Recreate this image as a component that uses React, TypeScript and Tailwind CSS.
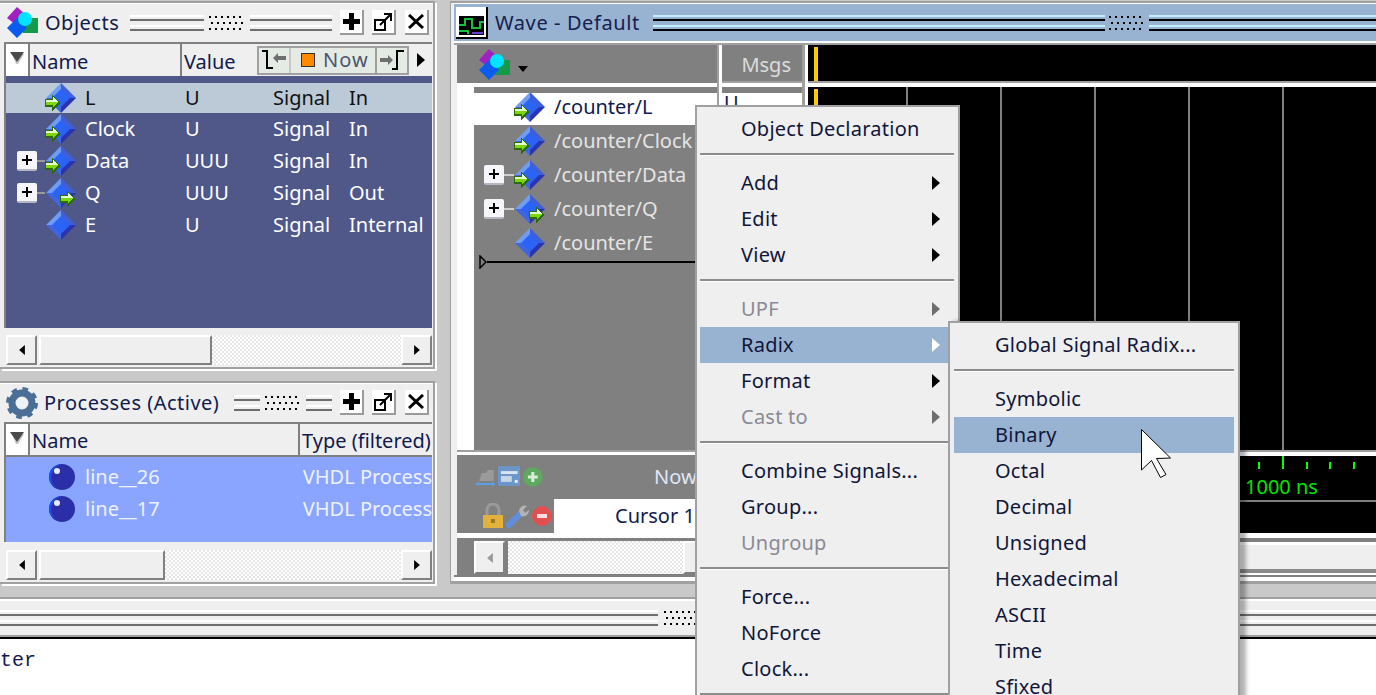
import clsx from "clsx";

type MenuEntry =
  | { kind: "sep" }
  | { kind: "item"; label: string; arrow?: boolean; disabled?: boolean; active?: boolean };

const item = (label: string, opts: Partial<Extract<MenuEntry, { kind: "item" }>> = {}): MenuEntry => ({
  kind: "item",
  label,
  ...opts,
});
const sep: MenuEntry = { kind: "sep" };

const mainMenu: MenuEntry[] = [
  item("Object Declaration"),
  sep,
  item("Add", { arrow: true }),
  item("Edit", { arrow: true }),
  item("View", { arrow: true }),
  sep,
  item("UPF", { arrow: true, disabled: true }),
  item("Radix", { arrow: true, active: true }),
  item("Format", { arrow: true }),
  item("Cast to", { arrow: true, disabled: true }),
  sep,
  item("Combine Signals..."),
  item("Group..."),
  item("Ungroup", { disabled: true }),
  sep,
  item("Force..."),
  item("NoForce"),
  item("Clock..."),
  sep,
];

const radixMenu: MenuEntry[] = [
  item("Global Signal Radix..."),
  sep,
  item("Symbolic"),
  item("Binary", { active: true }),
  item("Octal"),
  item("Decimal"),
  item("Unsigned"),
  item("Hexadecimal"),
  item("ASCII"),
  item("Time"),
  item("Sfixed"),
];

const objectRows = [
  { name: "L", value: "U", mode: "In", arrow: "in", selected: true },
  { name: "Clock", value: "U", mode: "In", arrow: "in" },
  { name: "Data", value: "UUU", mode: "In", arrow: "in", plus: true },
  { name: "Q", value: "UUU", mode: "Out", arrow: "out", plus: true },
  { name: "E", value: "U", mode: "Internal", arrow: "none" },
];

const waveRows = [
  { name: "/counter/L", arrow: "in", selected: true },
  { name: "/counter/Clock", arrow: "in" },
  { name: "/counter/Data", arrow: "in", plus: true },
  { name: "/counter/Q", arrow: "out", plus: true },
  { name: "/counter/E", arrow: "none" },
];

function SignalIcon({ arrow }: { arrow: string }) {
  return (
    <svg width="32" height="32" viewBox="0 0 32 32" className="shrink-0">
      <path d="M16 1 L31 16 L16 16 Z" fill="#3d5fd8" />
      <path d="M16 1 L1 16 L16 16 Z" fill="#6f9df2" />
      <path d="M1 16 L16 31 L16 16 Z" fill="#3f66dc" />
      <path d="M31 16 L16 31 L16 16 Z" fill="#2a35ad" />
      <path d="M16 7 L25 16 L16 25 L7 16 Z" fill="#2a63f5" />
      {arrow === "in" && (
        <g shapeRendering="crispEdges">
          <path d="M0 17 H7 V13 L15 21 L7 29 V25 H0 Z" fill="#2d6a08" />
          <path d="M1 18 H8 V15 L13 20 H1 Z" fill="#e4ffd0" />
          <path d="M1 20 H13 L8 25 V23 H1 Z" fill="#7cd80a" />
        </g>
      )}
      {arrow === "out" && (
        <g shapeRendering="crispEdges">
          <path d="M15 18 H22 V14 L30 22 L22 30 V26 H15 Z" fill="#2d6a08" />
          <path d="M16 19 H23 V16 L28 21 H16 Z" fill="#e4ffd0" />
          <path d="M16 21 H28 L23 26 V24 H16 Z" fill="#7cd80a" />
        </g>
      )}
    </svg>
  );
}

function ObjectsIcon() {
  return (
    <svg width="33" height="33" viewBox="0 0 33 33" className="shrink-0">
      <path d="M1 12 L11 1 L19 8 L9 18 Z" fill="#a020c0" />
      <rect x="17" y="12" width="15" height="15" fill="#149a48" />
      <path d="M11 12 L21 22 L11 32 L1 22 Z" fill="#0a5cf0" />
      <circle cx="19" cy="13" r="7" fill="#00e4ff" />
    </svg>
  );
}

function PlusBox() {
  return (
    <span className="flex h-[20px] w-[20px] shrink-0 items-center justify-center rounded-[2px] border-b-2 border-[#b6b6c4] bg-[#f6f6fa] text-black">
      <svg width="12" height="12" viewBox="0 0 12 12" shapeRendering="crispEdges">
        <path d="M5 1 H7 V5 H11 V7 H7 V11 H5 V7 H1 V5 H5 Z" fill="#000" />
      </svg>
    </span>
  );
}

function Triangle({ color, className }: { color: string; className?: string }) {
  return (
    <svg width="8" height="14" viewBox="0 0 8 14" className={className}>
      <path d="M0 0 L8 7 L0 14 Z" fill={color} />
    </svg>
  );
}

function Dots({ dot, className }: { dot: string; className?: string }) {
  const cells: { x: number; y: number }[] = [];
  for (let row = 0; row < 3; row++) {
    for (let col = 0; col < 6; col++) {
      cells.push({ x: 1 + col * 6 + (row === 1 ? 2 : 0), y: 1 + row * 6 });
    }
  }
  return (
    <svg width="38" height="16" viewBox="0 0 38 16" shapeRendering="crispEdges" className={className}>
      {cells.map((c) => (
        <rect key={`${c.x}-${c.y}`} x={c.x} y={c.y} width="2" height="2" fill={dot} />
      ))}
    </svg>
  );
}

function GripLines({ className, tone }: { className?: string; tone: "gray" | "blue" }) {
  const light = tone === "gray" ? "bg-white" : "bg-[#c4eefc]";
  const dark = tone === "gray" ? "bg-[#6e6e6e]" : "bg-black";
  return (
    <div className={clsx("flex flex-col", className)}>
      <div className={clsx("h-[2px]", light)} />
      <div className="h-[2px]" />
      <div className={clsx("h-[2px]", dark)} />
      <div className="h-[4px]" />
      <div className={clsx("h-[2px]", light)} />
      <div className="h-[2px]" />
      <div className={clsx("h-[2px]", dark)} />
    </div>
  );
}

function TitleButton({ children }: { children: React.ReactNode }) {
  return (
    <span className="flex h-[25px] w-[24px] items-center justify-center border-r-2 border-b-2 border-[#9a9a9a] bg-white">
      {children}
    </span>
  );
}

function PanelButtons() {
  return (
    <div className="ml-[8px] flex gap-[8px]">
      <TitleButton>
        <svg width="17" height="17" viewBox="0 0 17 17" shapeRendering="crispEdges">
          <path d="M6 0 H11 V6 H17 V11 H11 V17 H6 V11 H0 V6 H6 Z" fill="#000" />
        </svg>
      </TitleButton>
      <TitleButton>
        <svg width="18" height="18" viewBox="0 0 18 18" fill="none" stroke="#000" strokeWidth="2">
          <rect x="1" y="7" width="10" height="10" />
          <path d="M6 12 L16 2 M10 1 H17 V8" />
        </svg>
      </TitleButton>
      <span className="ml-[1px]">
        <TitleButton>
          <svg width="16" height="15" viewBox="0 0 16 15" fill="none" stroke="#000" strokeWidth="3">
            <path d="M1 1 L15 14 M15 1 L1 14" />
          </svg>
        </TitleButton>
      </span>
    </div>
  );
}

function ScrollButton({ dir, muted }: { dir: "left" | "right"; muted?: boolean }) {
  return (
    <span className="flex h-full w-[31px] shrink-0 items-center justify-center border-t-2 border-l-2 border-r-2 border-b-2 border-t-white border-l-white border-r-[#808080] border-b-[#808080] bg-[#efefef]">
      <Triangle
        color={muted ? "#9a9a9a" : "#000"}
        className={clsx("h-[10px] w-[6px]", dir === "left" && "rotate-180")}
      />
    </span>
  );
}

function Scrollbar({ thumb }: { thumb: string }) {
  return (
    <div className="flex h-[30px] items-stretch">
      <ScrollButton dir="left" />
      <span
        className={clsx(
          "ml-[2px] border-t-2 border-l-2 border-r-2 border-b-2 border-t-white border-l-white border-r-[#808080] border-b-[#808080] bg-[#efefef]",
          thumb,
        )}
      />
      <span className="flex-1 bg-[repeating-conic-gradient(#e6e6e6_0_25%,#ffffff_0_50%)] bg-[length:4px_4px]" />
      <ScrollButton dir="right" />
    </div>
  );
}

function FilterCell() {
  return (
    <div className="flex h-full w-[24px] shrink-0 items-center justify-center border-r-2 border-[#808080] bg-white">
      <svg width="16" height="14" viewBox="0 0 16 14" className="mb-[4px]">
        <path d="M3 3 H15 L9 13 H7 Z" fill="#c4c4c4" />
        <path d="M1 1 H15 L8 11 Z" fill="#4a4a4a" />
      </svg>
    </div>
  );
}

function SidePanel({
  title,
  icon,
  gripLeft,
  height,
  children,
}: {
  title: string;
  icon: React.ReactNode;
  gripLeft: string;
  height: string;
  children: React.ReactNode;
}) {
  return (
    <section
      className={clsx(
        "flex w-[435px] flex-col border-t-2 border-r-2 border-b-2 border-[#a0a0a0] bg-[#efefef] shadow-[2px_2px_0_#fff]",
        height,
      )}
    >
      <div className="flex h-[39px] shrink-0 items-center border-t border-white pr-[4px] pb-px pl-[6px]">
        {icon}
        <span className="ml-[6px] whitespace-nowrap tracking-[0.5px] text-[#111a4e]">{title}</span>
        <GripLines tone="gray" className={gripLeft} />
        <Dots dot="#000" className="mx-[4px] shrink-0" />
        <GripLines tone="gray" className="flex-1" />
        <PanelButtons />
      </div>
      {children}
    </section>
  );
}

function ObjectsPanel() {
  return (
    <SidePanel title="Objects" height="h-[368px]" gripLeft="ml-[11px] w-[74px]" icon={<ObjectsIcon />}>
      <div className="mr-px ml-[4px] flex h-[34px] shrink-0 items-center border-t-2 border-l-2 border-[#808080] bg-[#efefef] text-[#111a4e]">
        <FilterCell />
        <div className="flex h-full w-[152px] items-center border-r-2 border-[#808080] pt-[3px] pl-[2px]">Name</div>
        <div className="flex h-full w-[75px] items-center pt-[3px] pl-[2px]">Value</div>
        <div className="flex h-[29px] w-[152px] items-center border-2 border-[#a0a0a0] bg-[#e4ebe4]">
          <div className="flex h-full w-[32px] items-center justify-center border-r-2 border-[#c8c8c8]">
            <svg width="26" height="22" viewBox="0 0 26 22" fill="none">
              <path d="M1 2 H6 V19 H12" stroke="#000" strokeWidth="2" />
              <path d="M12 9 L17 4 V7 H25 V11 H17 V14 Z" fill="#6e6e6e" />
            </svg>
          </div>
          <div className="flex h-full flex-1 items-center pl-[10px] text-[#4d5570]">
            <span className="h-[14px] w-[14px] border border-[#333] bg-[#ff8a00]" />
            <span className="ml-[8px] tracking-[1px]">Now</span>
          </div>
          <div className="flex h-full w-[32px] items-center justify-center border-l-2 border-[#a0a0a0]">
            <svg width="26" height="22" viewBox="0 0 26 22" fill="none">
              <path d="M1 9 H9 V6 L14 11 L9 16 V13 H1 Z" fill="#6e6e6e" />
              <path d="M13 20 H18 V2 H25" stroke="#000" strokeWidth="2" />
            </svg>
          </div>
        </div>
        <Triangle color="#000" className="ml-[8px]" />
      </div>
      <div className="mr-px ml-[4px] h-[252px] shrink-0 border-l-2 border-[#808080] bg-[#50588a] pt-[7px] text-white">
        {objectRows.map((row) => (
          <div
            key={row.name}
            className={clsx(
              "flex items-center",
              row.selected ? "h-[30px] bg-[#bccad8] pb-px text-[#111]" : "h-[32px]",
            )}
          >
            <span className="flex w-[31px] justify-end">{row.plus ? <PlusBox /> : null}</span>
            {row.plus ? <span className="h-[2px] w-[8px] bg-[#9a9a9a]" /> : <span className="w-[8px]" />}
            <SignalIcon arrow={row.arrow} />
            <span className="ml-[8px] w-[100px]">{row.name}</span>
            <span className="w-[88px]">{row.value}</span>
            <span className="w-[76px]">Signal</span>
            <span className="whitespace-nowrap">{row.mode}</span>
          </div>
        ))}
      </div>
      <div className="mt-[7px] mr-px ml-[6px]">
        <Scrollbar thumb="w-[173px]" />
      </div>
    </SidePanel>
  );
}

function ProcessBall() {
  return (
    <svg width="28" height="28" viewBox="0 0 28 28" className="shrink-0">
      <circle cx="14" cy="14" r="13" fill="#2a2fa8" />
      <path d="M14 1 A13 13 0 0 0 1 14 A13 13 0 0 0 8 25 A14 14 0 0 1 14 1 Z" fill="#1a50e8" />
      <circle cx="9" cy="8" r="3" fill="#e6ecff" />
    </svg>
  );
}

function GearIcon() {
  return (
    <svg width="32" height="32" viewBox="0 0 32 32" className="shrink-0">
      <circle cx="16" cy="16" r="10" fill="none" stroke="#4a6f96" strokeWidth="7" />
      <circle cx="16" cy="16" r="14" fill="none" stroke="#4a6f96" strokeWidth="4" strokeDasharray="5.5 5.5" />
      <circle cx="16" cy="16" r="5" fill="#eef3f8" />
    </svg>
  );
}

function ProcessesPanel() {
  return (
    <SidePanel title="Processes (Active)" height="h-[203px]" gripLeft="ml-[15px] w-[26px]" icon={<GearIcon />}>
      <div className="mr-px ml-[4px] flex h-[35px] shrink-0 items-center border-t-2 border-b-2 border-l-2 border-[#808080] text-[#111a4e]">
        <FilterCell />
        <div className="flex h-full w-[270px] items-center border-r-2 border-[#808080] pt-[3px] pl-[2px]">Name</div>
        <div className="flex h-full flex-1 items-center overflow-hidden pt-[3px] pl-[2px] whitespace-nowrap">Type (filtered)</div>
      </div>
      <div className="mr-px ml-[4px] h-[85px] shrink-0 overflow-hidden border-l-2 border-[#808080] bg-[#8aa5ff] pt-[4px] text-[#eef2ff]">
        {["line__26", "line__17"].map((name) => (
          <div key={name} className="flex h-[32px] items-center">
            <span className="ml-[42px]">
              <ProcessBall />
            </span>
            <span className="ml-[9px] w-[218px]">{name}</span>
            <span className="whitespace-nowrap">VHDL Process</span>
          </div>
        ))}
      </div>
      <div className="mt-[8px] mr-px ml-[6px]">
        <Scrollbar thumb="w-[126px]" />
      </div>
    </SidePanel>
  );
}

function WaveIcon() {
  return (
    <svg width="32" height="32" viewBox="0 0 32 32" shapeRendering="crispEdges" className="shrink-0">
      <rect width="32" height="32" fill="#fff" />
      <rect x="30" width="2" height="32" fill="#000" />
      <rect y="30" width="32" height="2" fill="#000" />
      <rect x="3" y="3" width="25" height="4" fill="#fff" />
      <rect x="3" y="9" width="25" height="19" fill="#000" />
      <path d="M3 18 H9 V12 H16 V21 H24 V15 H28" fill="none" stroke="#12c040" strokeWidth="2" />
      <path d="M3 24 H12 V27" fill="none" stroke="#12c040" strokeWidth="2" />
      <path d="M16 26 H27" stroke="#6a3fd0" strokeWidth="2" />
    </svg>
  );
}

function ToolIcons() {
  return (
    <div className="flex w-[68px] items-center gap-[2px]">
      <svg width="20" height="20" viewBox="0 0 20 20">
        <path d="M3 14 L6 6 H10 L12 3 L18 3 V14 Z" fill="#9a9a9a" />
        <path d="M0 17 H19 M2 15 V19 M17 15 V19" stroke="#5f9be0" strokeWidth="2" />
      </svg>
      <svg width="23" height="22" viewBox="0 0 23 22">
        <rect width="23" height="20" fill="#6c95c9" />
        <rect x="3" y="5" width="17" height="3" fill="#d8e4f2" />
        <rect x="3" y="10" width="11" height="6" fill="#c6d5e8" />
        <rect x="17" y="14" width="3" height="3" fill="#e8eef6" />
      </svg>
      <svg width="22" height="22" viewBox="0 0 22 22">
        <circle cx="11" cy="11" r="10" fill="#5fa85f" />
        <path d="M11 6 V16 M6 11 H16" stroke="#d9eed9" strokeWidth="3" />
      </svg>
    </div>
  );
}

function CursorIcons() {
  return (
    <div className="flex w-[74px] items-center justify-end gap-[2px] pr-[2px]">
      <svg width="22" height="26" viewBox="0 0 22 26">
        <path d="M5 12 V7 A6 6 0 0 1 17 7 V12" fill="none" stroke="#9a9a9a" strokeWidth="3" />
        <rect x="1" y="12" width="20" height="13" fill="#e2b23c" />
        <rect x="9" y="16" width="4" height="4" fill="#9a7a20" />
      </svg>
      <svg width="24" height="24" viewBox="0 0 24 24">
        <path d="M3 21 L14 10" stroke="#5f8fdc" strokeWidth="6" strokeLinecap="round" />
        <path d="M13 7 A6 6 0 0 1 21 2 L17 6 L19 9 L23 6 A6 6 0 0 1 15 12 Z" fill="#b4b4b4" />
      </svg>
      <svg width="20" height="20" viewBox="0 0 20 20">
        <circle cx="10" cy="10" r="10" fill="#e05050" />
        <rect x="5" y="8" width="10" height="4" fill="#f6dede" />
      </svg>
    </div>
  );
}

function WavePanel() {
  return (
    <section className="h-[583px] min-w-0 flex-1 border-t-2 border-b-[3px] border-l border-[#a0a0a0] bg-[#efefef] pl-[3px]">
      <div className="flex h-[38px] items-center border-t border-white bg-[#98b3d1] pl-[2px]">
        <WaveIcon />
        <span className="ml-[7px] whitespace-nowrap tracking-[0.6px] text-[#15204f]">Wave - Default</span>
        <GripLines tone="blue" className="ml-[13px] w-[452px]" />
        <Dots dot="#000" className="mx-[3px] shrink-0" />
        <GripLines tone="blue" className="flex-1" />
      </div>
      <div className="h-[4px] border-t-2 border-b-2 border-white border-b-[#a0a0a0]" />
      <div className="ml-[3px] flex h-[405px]">
        <div className="flex w-[260px] shrink-0 flex-col">
          <div className="flex h-[38px] items-center bg-[#808080] pl-[21px]">
            <ObjectsIcon />
            <svg width="10" height="6" viewBox="0 0 10 6" className="mt-[10px] ml-[7px]">
              <path d="M0 0 H10 L5 6 Z" fill="#000" />
            </svg>
          </div>
          <div className="h-[4px] bg-white" />
          <div className="flex flex-1">
            <div className="w-[17px] bg-white" />
            <div className="flex-1 bg-[#808080] pt-[6px] text-[#e4e4e4]">
              {waveRows.map((row) => (
                <div
                  key={row.name}
                  className={clsx(
                    "flex items-center",
                    row.selected ? "h-[32px] bg-white pb-[4px] text-[#111a4e]" : "h-[34px] pb-[2px]",
                  )}
                >
                  <span className="flex w-[30px] justify-end">{row.plus ? <PlusBox /> : null}</span>
                  {row.plus ? <span className="h-[2px] w-[10px] bg-[#d0d0d0]" /> : <span className="w-[10px]" />}
                  <SignalIcon arrow={row.arrow} />
                  <span className="ml-[8px] whitespace-nowrap">{row.name}</span>
                </div>
              ))}
              <div className="-mt-[1px] flex h-[4px] items-center pl-[5px]">
                <svg width="8" height="14" viewBox="0 0 8 14" className="shrink-0">
                  <path d="M1 1 L7 7 L1 13 Z" fill="none" stroke="#000" strokeWidth="1.5" />
                </svg>
                <span className="h-[2px] flex-1 bg-black" />
              </div>
            </div>
          </div>
        </div>
        <div className="w-[5px] shrink-0 border-l-2 border-[#a0a0a0] bg-white" />
        <div className="flex w-[80px] shrink-0 flex-col">
          <div className="flex h-[36px] items-center justify-end bg-[#808080] pt-[3px] pr-[11px] text-[#dcdcdc]">Msgs</div>
          <div className="h-[2px] bg-[#a0a0a0]" />
          <div className="h-[4px] bg-white" />
          <div className="h-[6px] bg-[#808080]" />
          <div className="flex-1 bg-white pl-[2px] text-[#111a4e]">U</div>
        </div>
        <div className="w-[6px] shrink-0 border-l-[3px] border-[#a0a0a0] bg-white" />
        <div className="flex min-w-0 flex-1 flex-col bg-black">
          <div className="h-[36px] pt-[2px] pl-[6px]">
            <div className="h-full w-[4px] bg-[#ffcc00]" />
          </div>
          <div className="h-[2px] bg-[#a0a0a0]" />
          <div className="h-[4px] bg-white" />
          <div className="flex flex-1">
            <div className="w-[98px] shrink-0 pt-[2px] pl-[6px]">
              <div className="h-full w-[4px] bg-[#ffcc00]" />
            </div>
            {[0, 1, 2, 3, 4].map((n) => (
              <div key={n} className="w-[94px] shrink-0 border-l-2 border-[#808080]" />
            ))}
          </div>
        </div>
      </div>
      <div className="ml-[3px] flex h-[88px]">
        <div className="flex w-[260px] shrink-0 flex-col">
          <div className="h-[5px] border-t-2 border-[#a0a0a0] bg-white" />
          <div className="flex h-[44px] items-center bg-[#808080] pl-[19px] text-[#dfe6f5]">
            <ToolIcons />
            <span className="ml-[110px]">Now</span>
          </div>
          <div className="flex h-[34px] bg-[#808080] text-[#111a4e]">
            <div className="flex w-[97px] items-center">
              <span className="ml-[23px]">
                <CursorIcons />
              </span>
            </div>
            <div className="flex flex-1 items-center bg-white pl-[61px] whitespace-nowrap">Cursor 1</div>
          </div>
          <div className="h-[5px] bg-white" />
        </div>
        <div className="w-[91px] shrink-0 bg-black" />
        <div className="flex min-w-0 flex-1 flex-col bg-black">
          <div className="h-[2px] bg-[#a0a0a0]" />
          <div className="h-[4px] bg-white" />
          <svg width="568" height="14" viewBox="0 0 568 14" shapeRendering="crispEdges" className="shrink-0">
            {[450, 498, 521, 545].map((x) => (
              <rect key={x} x={x} y="6" width="2" height="7" fill="#00ff00" />
            ))}
            <rect x="474" y="0" width="2" height="13" fill="#00ff00" />
          </svg>
          <div className="h-[30px] pt-[7px] pl-[437px] whitespace-nowrap text-[#00e600]">1000 ns</div>
          <div className="h-[2px] bg-[#808080]" />
          <div className="flex-1" />
          <div className="h-[5px] bg-white" />
        </div>
      </div>
      <div className="ml-[3px] flex h-[37px]">
        <div className="flex w-[260px] shrink-0 bg-[#808080] pt-[3px] pl-[17px]">
          <div className="min-w-0 flex-1">
            <div className="flex h-[33px] items-stretch">
              <ScrollButton dir="left" muted />
              <span className="ml-[3px] w-[175px] bg-[repeating-conic-gradient(#e6e6e6_0_25%,#ffffff_0_50%)] bg-[length:4px_4px]" />
              <span className="flex-1 border-2 border-t-white border-r-[#808080] border-b-[#808080] border-l-white bg-[#efefef]" />
            </div>
          </div>
        </div>
        <div className="flex flex-1 flex-col">
          <div className="h-[4px] bg-[#808080]" />
          <div className="h-[3px] bg-white" />
          <div className="h-[24px] bg-[#efefef]" />
          <div className="h-[4px] bg-[#8a8a8a]" />
          <div className="h-[2px] bg-white" />
        </div>
      </div>
      <div className="h-[2px] bg-[#808080]" />
      <div className="h-[4px] bg-white" />
    </section>
  );
}

function Menu({ entries, className }: { entries: MenuEntry[]; className: string }) {
  return (
    <div className={clsx("absolute border-2 border-[#a0a0a0] bg-[#efefef] py-[4px] pr-[4px] tracking-[0.25px]", className)}>
      {entries.map((entry, i) =>
        entry.kind === "sep" ? (
          <div key={i} className="flex h-[18px] flex-col pt-[6px]">
            <div className="h-[2px] bg-[#8c8c8c]" />
            <div className="h-px bg-white" />
          </div>
        ) : (
          <div
            key={i}
            className={clsx(
              "flex h-[36px] items-center justify-between pr-[14px] pl-[41px] whitespace-nowrap",
              entry.active && "bg-[#98b3d1] text-[#10163a]",
              !entry.active && (entry.disabled ? "text-[#8a8a94]" : "text-[#10163a]"),
            )}
          >
            <span>{entry.label}</span>
            {entry.arrow ? (
              <Triangle
                color={entry.active ? "#ffffff" : entry.disabled ? "#6e6e6e" : "#000000"}
                className="h-[14px] w-[8px]"
              />
            ) : null}
          </div>
        ),
      )}
    </div>
  );
}

function MouseCursor() {
  return (
    <svg width="32" height="50" viewBox="0 0 32 50" className="absolute top-[429px] left-[1141px]">
      <path
        d="M0.5 0.5 L29.5 29 L15.5 29.5 L25 45.5 L19.5 48.5 L10.5 31.5 L0.5 41 Z"
        fill="#fff"
        stroke="#000"
        strokeWidth="1"
      />
    </svg>
  );
}

export default function App() {
  return (
    <div className="relative h-[695px] w-[1376px] overflow-hidden bg-white font-['Noto_Sans',sans-serif] text-[20px] leading-none">
      <div className="flex h-[597px] items-start gap-[15px] bg-[#c9c9c9] pt-px">
        <div className="flex flex-col gap-[12px]">
          <ObjectsPanel />
          <ProcessesPanel />
        </div>
        <WavePanel />
      </div>
      <div className="flex h-[42px] flex-col border-t-2 border-[#a0a0a0] bg-[#efefef]">
        <div className="h-[2px] bg-white" />
        <div className="flex flex-1 items-center">
          <GripLines tone="gray" className="w-[658px]" />
          <Dots dot="#000" className="mx-[5px] shrink-0" />
          <GripLines tone="gray" className="flex-1" />
        </div>
        <div className="h-[2px] bg-[#a0a0a0]" />
        <div className="h-[2px] bg-black" />
      </div>
      <div className="pt-[12px] font-['Liberation_Mono',monospace] text-[#111a4e]">ter</div>
      <Menu entries={mainMenu} className="top-[105px] left-[695px] w-[265px] pl-[3px]" />
      <Menu
        entries={radixMenu}
        className="top-[321px] left-[948px] w-[292px] pl-[4px] shadow-[6px_0_4px_rgba(0,0,0,0.3)]"
      />
      <MouseCursor />
    </div>
  );
}
